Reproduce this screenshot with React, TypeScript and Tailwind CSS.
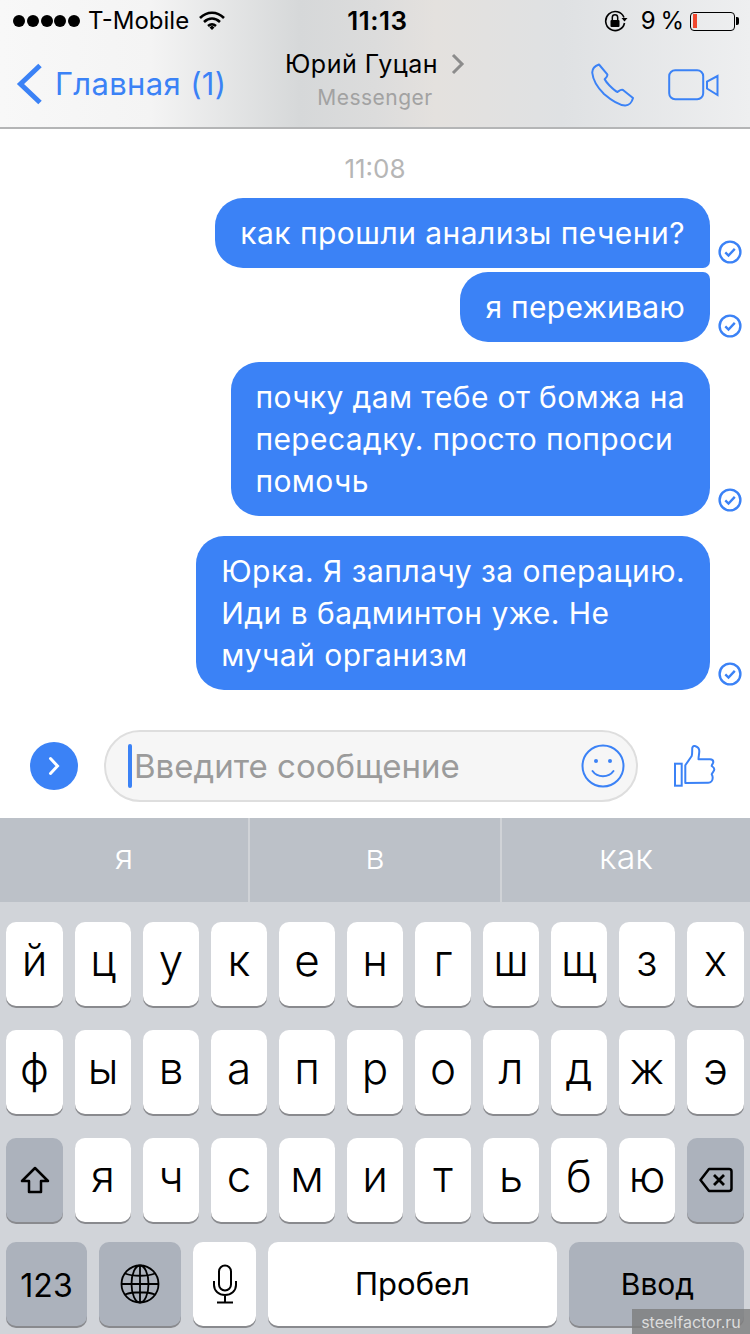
import React from "react";

const font = { fontFamily: "Inter, 'Noto Sans', sans-serif" };

function Check() {
  return (
    <svg width="24" height="24" viewBox="0 0 24 24" className="mb-[4px] shrink-0">
      <circle cx="12" cy="12" r="10.4" fill="none" stroke="#3b82f6" strokeWidth="2.4" />
      <path d="M7.3 12.4l3.2 3.1 6.3-6.6" fill="none" stroke="#3b82f6" strokeWidth="2.4" />
    </svg>
  );
}

function Bubble({ lines, className }: { lines: string[]; className: string }) {
  return (
    <div className="flex justify-end items-end gap-[8px] pr-[8px]">
      <div className={"bg-[#3b82f6] text-white text-[30px] leading-[42px] pl-[25px] pr-[25px] pt-[14px] pb-[14px] rounded-[28px] whitespace-nowrap " + className}>
        {lines.map((l) => (
          <div key={l}>{l}</div>
        ))}
      </div>
      <Check />
    </div>
  );
}

function Key({ c, className }: { c: React.ReactNode; className: string }) {
  return (
    <div className={"h-[84px] rounded-[10px] flex items-center justify-center text-black text-[44px] font-light shadow-[0_2px_0_#898a8e] " + className}>
      {c}
    </div>
  );
}

const Row = ({ keys, edges }: { keys: string[]; edges: boolean }) => (
  <>
    {keys.map((k, i) => (
      <Key
        key={k}
        className={edges && (i === 0 || i === keys.length - 1) ? "w-[57px] bg-white" : "w-[56px] bg-white"}
        c={<span className="-mt-[8px]">{k}</span>}
      />
    ))}
  </>
);

export default function App() {
  return (
    <div style={font} className="relative w-[750px] h-[1334px] overflow-hidden bg-white flex flex-col">
      <header className="h-[129px] shrink-0 border-b-2 border-[#b4b5b6] flex flex-col bg-[linear-gradient(90deg,#f8f8f8_0%,#f4f4f4_20%,#d6d8d9_40%,#dcdcdc_50%,#e4e1de_58%,#dfe1e3_75%,#eeeff0_100%)]">
        <div className="h-[42px] grid grid-cols-[1fr_auto_1fr] items-center text-black">
          <div className="flex items-center pl-[13px]">
            <div className="flex gap-[1.75px]">
              {[0, 1, 2, 3, 4].map((i) => (
                <div key={i} className="w-[12px] h-[12px] rounded-full bg-black" />
              ))}
            </div>
            <span className="ml-[8px] text-[24px] leading-none font-normal">T-Mobile</span>
            <svg width="26" height="20" viewBox="0 0 26 20" className="ml-[10px]">
              <path d="M1 7c7-7 17-7 24 0" fill="none" stroke="#000" strokeWidth="2.6" />
              <path d="M5 11c5-4.500 11-4.500 16 0" fill="none" stroke="#000" strokeWidth="2.6" />
              <path d="M9 15c3-2.500 5-2.500 8 0" fill="none" stroke="#000" strokeWidth="2.6" />
              <path d="M10.500 16.500l2.500-2 2.500 2L13 19z" fill="#000" />
            </svg>
          </div>
          <div className="ml-[5px] text-[26px] tracking-[0.5px] font-semibold leading-none">11:13</div>
          <div className="flex items-center justify-end pr-[11px]">
            <svg width="24" height="22" viewBox="0 0 24 22">
              <path d="M20 7.500A9.500 9.500 0 1 0 20.500 13" fill="none" stroke="#000" strokeWidth="1.600" />
              <path d="M17.500 8h6l-3 3.500z" fill="#000" />
              <rect x="6.500" y="10" width="9" height="7" rx="1" fill="#000" />
              <path d="M8.300 10V7.500a2.700 2.700 0 0 1 5.400 0V10" fill="none" stroke="#000" strokeWidth="1.500" />
            </svg>
            <span className="ml-[13px] text-[24px] leading-none tracking-[-1px]">9 %</span>
            <div className="ml-[7px] w-[45px] h-[19px] rounded-[4px] border-[1.5px] border-black flex items-center pl-[1.5px]">
              <div className="w-[4px] h-[14px] bg-[#f0482f]" />
            </div>
            <div className="w-[3px] h-[8px] bg-black rounded-r-[2px] ml-[1px]" />
          </div>
        </div>
        <div className="flex-1 grid grid-cols-[1fr_auto_1fr] items-start">
          <div className="flex items-center pl-[16px] pt-[21px]">
            <svg width="26" height="42" viewBox="0 0 26 42">
              <path d="M24 2.500L4.500 21 24 39.500" fill="none" stroke="#3b82f6" strokeWidth="5" />
            </svg>
            <span className="ml-[13px] text-[31px] leading-[42px] tracking-[0.35px] text-[#3b82f6]">Главная (1)</span>
          </div>
          <div className="flex flex-col items-center pt-[7px]">
            <div className="flex items-center">
              <span className="text-[25px] leading-[30px] text-black tracking-[0.5px]">Юрий Гуцан</span>
              <svg width="14" height="22" viewBox="0 0 14 22" className="ml-[13px]">
                <path d="M2 2l9 9-9 9" fill="none" stroke="#8c8c8c" strokeWidth="3" />
              </svg>
            </div>
            <div className="text-[21px] leading-[28px] text-[#a2a2a2] mt-[5px] tracking-[0.5px]">Messenger</div>
          </div>
          <div className="flex justify-end items-center pr-[30px] pt-[21px] gap-[33px]">
            <svg width="44" height="44" viewBox="0 0 44 44">
              <path d="M8 1.500C4 3 1 6 1.300 10 2 17 6 24 13 31c7 6 14 11 21 11.500 4 .2 7-3.500 8-7.500L32 27c-2-1-4 1-5.500 2-2.500-1-5.500-4-8-6.500-2.500-2.500-4-4.500-4.800-6.200 1.300-1.300 3.300-3.300 2.600-5z" fill="none" stroke="#3b82f6" strokeWidth="2" strokeLinejoin="round" />
            </svg>
            <svg width="52" height="32" viewBox="0 0 52 32">
              <rect x="1.200" y="1.200" width="34" height="29" rx="6" fill="none" stroke="#3b82f6" strokeWidth="2" />
              <path d="M49.500 7v19L39 19.500v-7z" fill="none" stroke="#3b82f6" strokeWidth="2" />
            </svg>
          </div>
        </div>
      </header>

      <main className="h-[689px] shrink-0 flex flex-col">
        <div className="pt-[25px] h-[69px] text-center text-[26px] leading-[30px] text-[#b6b6b6]">11:08</div>
        <Bubble lines={["как прошли анализы печени?"]} className="rounded-br-[7px] tracking-[0.46px]" />
        <div className="mt-[4px]">
          <Bubble lines={["я переживаю"]} className="rounded-tr-[7px] tracking-[0.28px]" />
        </div>
        <div className="mt-[20px]">
          <Bubble lines={["почку дам тебе от бомжа на", "пересадку. просто попроси", "помочь"]} className="tracking-[0.36px]" />
        </div>
        <div className="mt-[20px]">
          <Bubble lines={["Юрка. Я заплачу за операцию.", "Иди в бадминтон уже. Не", "мучай организм"]} className="tracking-[0.47px]" />
        </div>
        <div className="mt-[40px] flex items-center pl-[30px]">
          <div className="w-[48px] h-[48px] rounded-full bg-[#3b82f6] flex items-center justify-center">
            <svg width="14" height="22" viewBox="0 0 14 22">
              <path d="M3.500 3.500l7 7.500-7 7.500" fill="none" stroke="#fff" strokeWidth="3" strokeLinecap="round" />
            </svg>
          </div>
          <div className="ml-[26px] w-[534px] h-[72px] rounded-[36px] border-2 border-[#dedede] bg-[#f6f6f6] flex items-center pl-[22px] pr-[11px]">
            <div className="w-[4px] h-[44px] rounded-[2px] bg-[#3b82f6]" />
            <span className="ml-[2px] text-[33px] text-[#9b9b9b] leading-none">Введите сообщение</span>
            <svg width="44" height="44" viewBox="0 0 44 44" className="ml-auto">
              <circle cx="22" cy="22" r="20.500" fill="none" stroke="#3b82f6" strokeWidth="2" />
              <circle cx="15" cy="17" r="2" fill="#3b82f6" />
              <circle cx="29" cy="17" r="2" fill="#3b82f6" />
              <path d="M11.500 27c5 7 16 7 21 0" fill="none" stroke="#3b82f6" strokeWidth="2" strokeLinecap="round" />
            </svg>
          </div>
          <svg width="43" height="43" viewBox="0 0 43 43" className="ml-[35px]">
            <rect x="2" y="18.700" width="6.700" height="22" fill="none" stroke="#3b82f6" strokeWidth="2" />
            <path d="M12.300 38V20.300L18.700 11c.8-2.500.3-5.500.6-8.300.5-1.500 2-2 2.700-1.700 2.500.8 4.300 2.500 4.300 5 0 3-.8 5.300-.8 8.300H37c2.300 0 3.300 1.200 3.300 2.700 0 1.700-1.600 2.500-1.600 4 1.300.8 2.600 1.700 2.600 3.300 0 2-1.800 2.500-2.600 5 .5.800 1 2.200 1 3.400 0 3-2 5-4.400 5z" fill="none" stroke="#3b82f6" strokeWidth="2" strokeLinejoin="round" />
          </svg>
        </div>
      </main>

      <div className="h-[84px] shrink-0 bg-[#bcc1c8] flex text-white text-[34px] font-light">
        <div className="w-[248px] flex items-center justify-center pb-[8px]">я</div>
        <div className="w-[2px] bg-[#d0d3d7]" />
        <div className="w-[250px] flex items-center justify-center pb-[8px]">в</div>
        <div className="w-[2px] bg-[#d0d3d7]" />
        <div className="flex-1 flex items-center justify-center pb-[8px]">как</div>
      </div>

      <div className="flex-1 bg-[#d1d4d9] px-[6px] pt-[20px] flex flex-col">
        <div className="flex gap-[12px]">
          <Row edges keys={["й", "ц", "у", "к", "е", "н", "г", "ш", "щ", "з", "х"]} />
        </div>
        <div className="flex gap-[12px] mt-[24px]">
          <Row edges keys={["ф", "ы", "в", "а", "п", "р", "о", "л", "д", "ж", "э"]} />
        </div>
        <div className="flex gap-[12px] mt-[24px]">
          <Key
            className="w-[57px] bg-[#acb2bc]"
            c={
              <svg width="30" height="28" viewBox="0 0 30 28">
                <path d="M15 2L2 15h7v11h12V15h7z" fill="none" stroke="#000" strokeWidth="2.500" strokeLinejoin="round" />
              </svg>
            }
          />
          <Row edges={false} keys={["я", "ч", "с", "м", "и", "т", "ь", "б", "ю"]} />
          <Key
            className="w-[57px] bg-[#acb2bc]"
            c={
              <svg width="34" height="26" viewBox="0 0 34 26">
                <path d="M10 2h20a2.500 2.500 0 0 1 2.500 2.500v17A2.500 2.500 0 0 1 30 24H10L1.500 13z" fill="none" stroke="#000" strokeWidth="2.500" strokeLinejoin="round" />
                <path d="M15 8l10 10M25 8L15 18" stroke="#000" strokeWidth="2.800" />
              </svg>
            }
          />
        </div>
        <div className="flex gap-[12px] mt-[20px]">
          <Key className="w-[81px] bg-[#acb2bc] !text-[32px] !font-normal pt-[3px]" c="123" />
          <Key
            className="w-[82px] bg-[#acb2bc]"
            c={
              <svg width="40" height="40" viewBox="0 0 40 40" fill="none" stroke="#000" strokeWidth="1.800">
                <circle cx="20" cy="20" r="18.500" />
                <ellipse cx="20" cy="20" rx="8.500" ry="18.500" />
                <path d="M20 1.500v37M1.500 20h37M5 9.500c8 3 22 3 30 0M5 30.500c8-3 22-3 30 0" />
              </svg>
            }
          />
          <Key
            className="w-[63px] bg-white"
            c={
              <svg width="26" height="40" viewBox="0 0 26 40" fill="none" stroke="#000" strokeWidth="2">
                <rect x="7" y="1.500" width="12" height="25" rx="6" />
                <path d="M2 17v4c0 6 5 10 11 10s11-4 11-10v-4M13 31v7M5 38.500h16" />
              </svg>
            }
          />
          <Key className="w-[289px] bg-white !text-[31px] !font-normal" c="Пробел" />
          <Key className="w-[175px] bg-[#acb2bc] !text-[30px] !font-normal pl-[2px]" c="Ввод" />
        </div>
      </div>

      <div className="absolute right-0 bottom-0 w-[118px] h-[25px] bg-[#7d7d7d]/80 flex items-center justify-center text-[16px] leading-none text-[#dcdcdc]">
        steelfactor.ru
      </div>
    </div>
  );
}
